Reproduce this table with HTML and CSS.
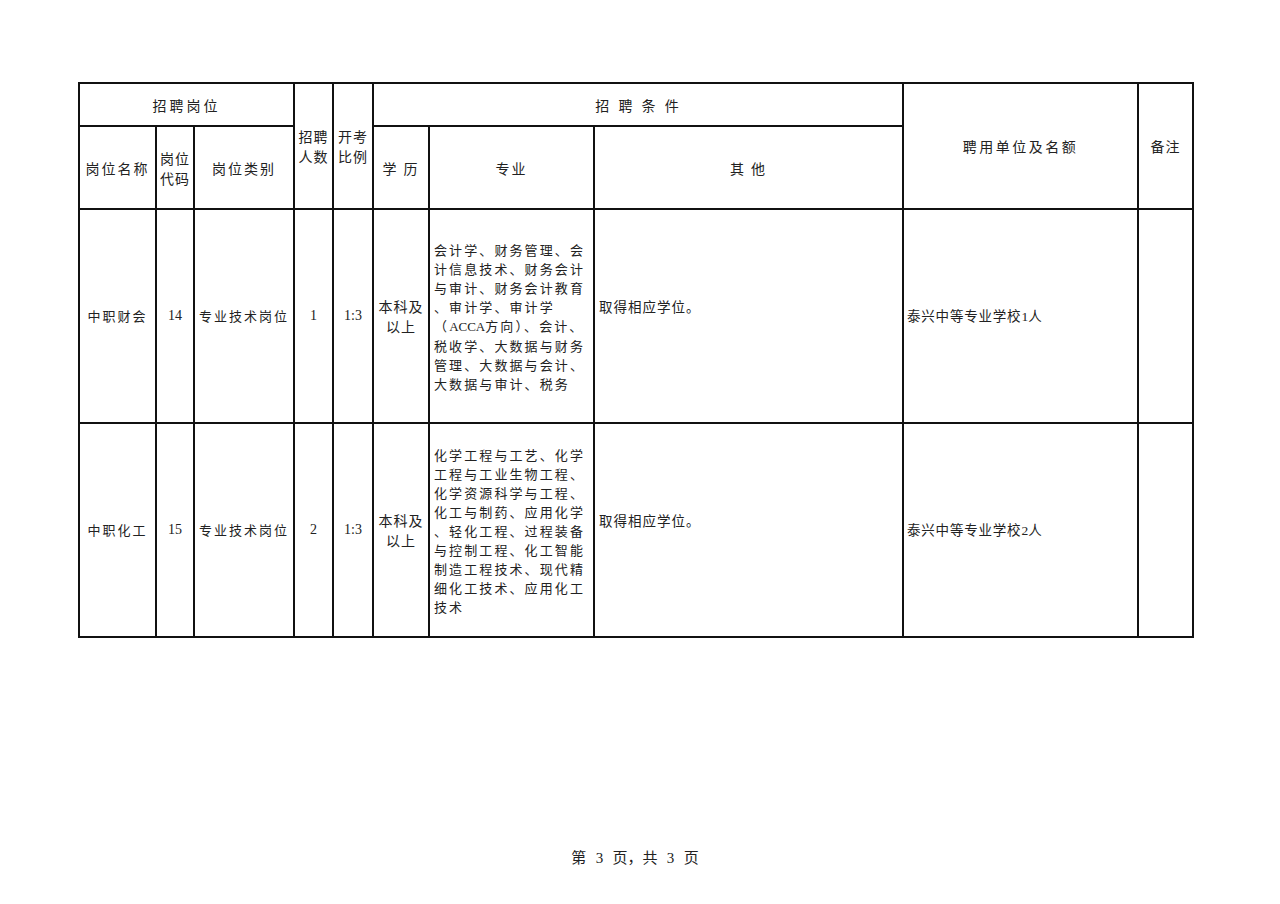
FILE: index.html
```html
<!DOCTYPE html>
<html lang="zh">
<head>
<meta charset="utf-8">
<title>招聘岗位表</title>
<link rel="stylesheet" href="styles.css">
</head>
<body>
<div class="page">
  <table class="grid">
    <colgroup>
      <col class="c1"><col class="c2"><col class="c3"><col class="c4"><col class="c5">
      <col class="c6"><col class="c7"><col class="c8"><col class="c9"><col class="c10">
    </colgroup>
    <tr class="h1">
      <td colspan="3" class="wide">招聘岗位</td>
      <td rowspan="2" class="stack">招聘<br>人数</td>
      <td rowspan="2" class="stack">开考<br>比例</td>
      <td colspan="3" class="wider">招 聘 条 件</td>
      <td rowspan="2" class="unit-h">聘用单位及名额</td>
      <td rowspan="2" class="note-h">备注</td>
    </tr>
    <tr class="h2">
      <td class="spaced">岗位名称</td>
      <td class="stack">岗位<br>代码</td>
      <td class="spaced">岗位类别</td>
      <td class="spaced">学 历</td>
      <td class="spaced">专业</td>
      <td class="spaced">其 他</td>
    </tr>
    <tr class="row">
      <td class="spaced">中职财会</td>
      <td class="num">14</td>
      <td class="spaced">专业技术岗位</td>
      <td class="num">1</td>
      <td class="num">1:3</td>
      <td class="stack">本科及<br>以上</td>
      <td class="major">会计学、财务管理、会<br>计信息技术、财务会计<br>与审计、财务会计教育<br>、审计学、审计学<br>（<span class="latin">ACCA</span>方向）、会计、<br>税收学、大数据与财务<br>管理、大数据与会计、<br>大数据与审计、税务</td>
      <td class="other">取得相应学位。</td>
      <td class="unit">泰兴中等专业学校<span class="latin">1</span>人</td>
      <td></td>
    </tr>
    <tr class="row">
      <td class="spaced">中职化工</td>
      <td class="num">15</td>
      <td class="spaced">专业技术岗位</td>
      <td class="num">2</td>
      <td class="num">1:3</td>
      <td class="stack">本科及<br>以上</td>
      <td class="major">化学工程与工艺、化学<br>工程与工业生物工程、<br>化学资源科学与工程、<br>化工与制药、应用化学<br>、轻化工程、过程装备<br>与控制工程、化工智能<br>制造工程技术、现代精<br>细化工技术、应用化工<br>技术</td>
      <td class="other">取得相应学位。</td>
      <td class="unit">泰兴中等专业学校<span class="latin">2</span>人</td>
      <td></td>
    </tr>
  </table>
  <div class="footer">第 <span class="latin">3</span> 页，共 <span class="latin">3</span> 页</div>
</div>
</body>
</html>
```

FILE: styles.css
```css
html, body {
  margin: 0;
  padding: 0;
  background: #ffffff;
}

body {
  font-family: "Noto Sans CJK SC", "Noto Sans", sans-serif;
  color: #222;
  font-size: 13px;
}

.page {
  width: 1280px;
  height: 904px;
  padding: 82px 0 0 78px;
  box-sizing: border-box;
}

.grid {
  border-collapse: collapse;
  table-layout: fixed;
  width: 1114px;
}

.grid td {
  border: 2px solid #111;
  padding: 0;
  text-align: center;
  vertical-align: middle;
  line-height: 20px;
  font-weight: 400;
}

.c1 { width: 77px; }
.c2 { width: 38px; }
.c3 { width: 100px; }
.c4 { width: 39px; }
.c5 { width: 40px; }
.c6 { width: 56px; }
.c7 { width: 165px; }
.c8 { width: 309px; }
.c9 { width: 235px; }
.c10 { width: 55px; }

.h1 { height: 43px; }
.h2 { height: 83px; }
.row { height: 214px; }

.wide {
  font-size: 14px;
  letter-spacing: 3px;
}

.wider {
  font-size: 14px;
  letter-spacing: 2px;
  word-spacing: 2px;
}

.spaced {
  letter-spacing: 2px;
  font-size: 14px;
}

.row .spaced {
  font-size: 13px;
  letter-spacing: 2px;
}

.stack {
  font-size: 14px;
  letter-spacing: 1px;
  line-height: 20px;
}

.unit-h {
  font-size: 14px;
  letter-spacing: 2.5px;
}

.note-h {
  font-size: 14px;
  letter-spacing: 1px;
}

.num {
  font-family: "Liberation Serif", "Times New Roman", serif;
  font-size: 14px;
}

.latin {
  font-family: "Liberation Serif", "Times New Roman", serif;
  letter-spacing: 0;
}

.grid td.major {
  text-align: left;
  padding: 0 4px;
  font-size: 13px;
  letter-spacing: 2.1px;
  line-height: 19px;
  white-space: nowrap;
}

.grid td.other {
  text-align: left;
  padding: 0 0 20px 4px;
  font-size: 13.5px;
  letter-spacing: 1px;
}

.grid td.unit {
  text-align: left;
  padding: 0 0 0 3px;
  font-size: 13.5px;
  letter-spacing: 0.8px;
}

.footer {
  width: 1114px;
  margin-top: 208px;
  text-align: center;
  font-size: 15px;
  word-spacing: 6px;
}
```
